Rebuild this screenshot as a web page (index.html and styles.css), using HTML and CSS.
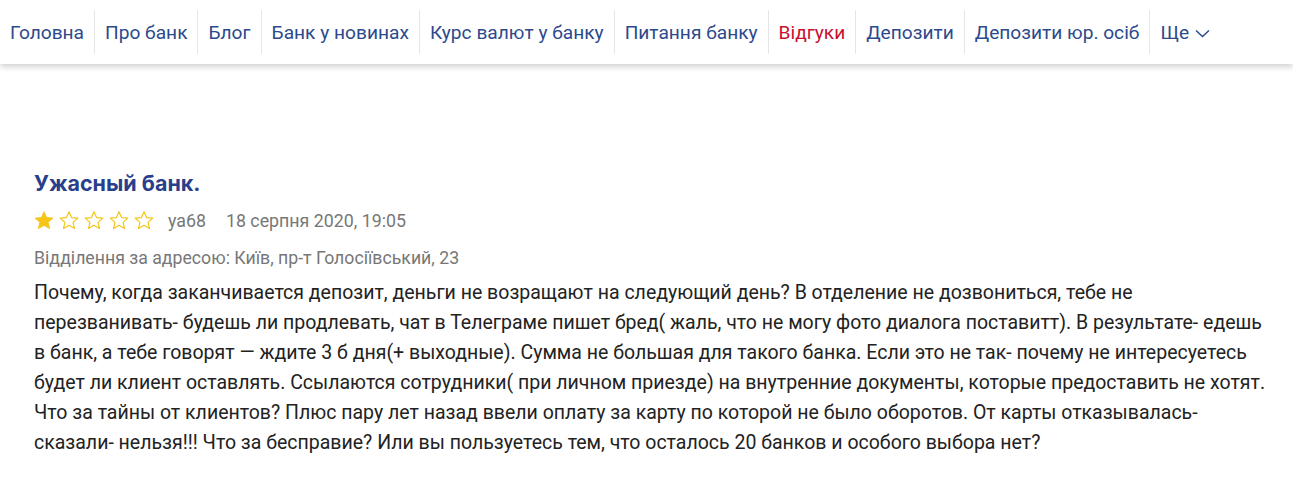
FILE: index.html
```html
<!DOCTYPE html>
<html lang="uk">
<head>
<meta charset="utf-8">
<link rel="stylesheet" href="styles.css">
</head>
<body>
<nav class="nav">
  <a class="nav-item" href="#">Головна</a>
  <a class="nav-item" href="#">Про банк</a>
  <a class="nav-item" href="#">Блог</a>
  <a class="nav-item" href="#">Банк у новинах</a>
  <a class="nav-item" href="#">Курс валют у банку</a>
  <a class="nav-item" href="#">Питання банку</a>
  <a class="nav-item active" href="#">Відгуки</a>
  <a class="nav-item" href="#">Депозити</a>
  <a class="nav-item" href="#">Депозити юр. осіб</a>
  <a class="nav-item more" href="#">Ще <svg class="chev" width="15" height="9" viewBox="0 0 15 9"><path d="M1 1.5l6.5 6 6.5-6" fill="none" stroke="#2c4a8c" stroke-width="1.5"/></svg></a>
</nav>
<article class="review">
  <h2 class="title">Ужасный банк.</h2>
  <div class="meta">
    <div class="stars">
      <svg width="20" height="19" viewBox="0 0 24 23"><path d="M12 1l3.1 7 7.6.7-5.8 5 1.8 7.5L12 17.3 5.3 21.2l1.8-7.5-5.8-5L8.9 8z" fill="#f5c518" stroke="#f5c518" stroke-width="1.2" stroke-linejoin="round"/></svg>
      <svg width="20" height="19" viewBox="0 0 24 23"><path d="M12 1l3.1 7 7.6.7-5.8 5 1.8 7.5L12 17.3 5.3 21.2l1.8-7.5-5.8-5L8.9 8z" fill="none" stroke="#f5c518" stroke-width="1.4" stroke-linejoin="round"/></svg>
      <svg width="20" height="19" viewBox="0 0 24 23"><path d="M12 1l3.1 7 7.6.7-5.8 5 1.8 7.5L12 17.3 5.3 21.2l1.8-7.5-5.8-5L8.9 8z" fill="none" stroke="#f5c518" stroke-width="1.4" stroke-linejoin="round"/></svg>
      <svg width="20" height="19" viewBox="0 0 24 23"><path d="M12 1l3.1 7 7.6.7-5.8 5 1.8 7.5L12 17.3 5.3 21.2l1.8-7.5-5.8-5L8.9 8z" fill="none" stroke="#f5c518" stroke-width="1.4" stroke-linejoin="round"/></svg>
      <svg width="20" height="19" viewBox="0 0 24 23"><path d="M12 1l3.1 7 7.6.7-5.8 5 1.8 7.5L12 17.3 5.3 21.2l1.8-7.5-5.8-5L8.9 8z" fill="none" stroke="#f5c518" stroke-width="1.4" stroke-linejoin="round"/></svg>
    </div>
    <span class="author">уа68</span>
    <span class="date">18 серпня 2020, 19:05</span>
  </div>
  <div class="address">Відділення за адресою: Київ, пр-т Голосіївський, 23</div>
  <p class="text">Почему, когда заканчивается депозит, деньги не возращают на следующий день? В отделение не дозвониться, тебе не перезванивать- будешь ли продлевать, чат в Телеграме пишет бред( жаль, что не могу фото диалога поставитт). В результате- едешь в банк, а тебе говорят — ждите 3 б дня(+ выходные). Сумма не большая для такого банка. Если это не так- почему не интересуетесь будет ли клиент оставлять. Ссылаются сотрудники( при личном приезде) на внутренние документы, которые предоставить не хотят. Что за тайны от клиентов? Плюс пару лет назад ввели оплату за карту по которой не было оборотов. От карты отказывалась- сказали- нельзя!!! Что за бесправие? Или вы пользуетесь тем, что осталось 20 банков и особого выбора нет?</p>
</article>
</body>
</html>
```
FILE: styles.css
```css
html, body {
  margin: 0;
  padding: 0;
  background: #fff;
  font-family: Roboto, "Liberation Sans", sans-serif;
}
.nav {
  display: flex;
  align-items: center;
  height: 64px;
  background: #fff;
  box-shadow: 0 3px 6px rgba(0,0,0,0.18);
}
.nav-item {
  display: flex;
  align-items: center;
  gap: 6px;
  height: 44px;
  padding: 0 10px;
  font-size: 19.15px;
  color: #2c4a8c;
  text-decoration: none;
  border-left: 1px solid #e6e6e6;
}
.nav-item:first-child {
  border-left: none;
}
.nav-item.active {
  color: #c8102e;
}
.chev {
  margin-top: 2px;
}
.review {
  padding: 106px 16px 0 34px;
}
.title {
  margin: 0;
  font-family: Inter, "Open Sans", sans-serif;
  font-weight: 700;
  font-size: 21.5px;
  line-height: 26px;
  color: #2a3f8c;
}
.meta {
  display: flex;
  align-items: center;
  margin-top: 12px;
  height: 24px;
  font-size: 17.8px;
  color: #777;
}
.stars {
  display: flex;
  gap: 5px;
  margin-right: 14px;
}
.author {
  margin-right: 20px;
}
.address {
  margin-top: 14px;
  font-size: 17.7px;
  color: #777;
  line-height: 24px;
}
.text {
  margin: 8px 0 0 0;
  font-size: 19.5px;
  line-height: 30px;
  color: #222;
}
```
